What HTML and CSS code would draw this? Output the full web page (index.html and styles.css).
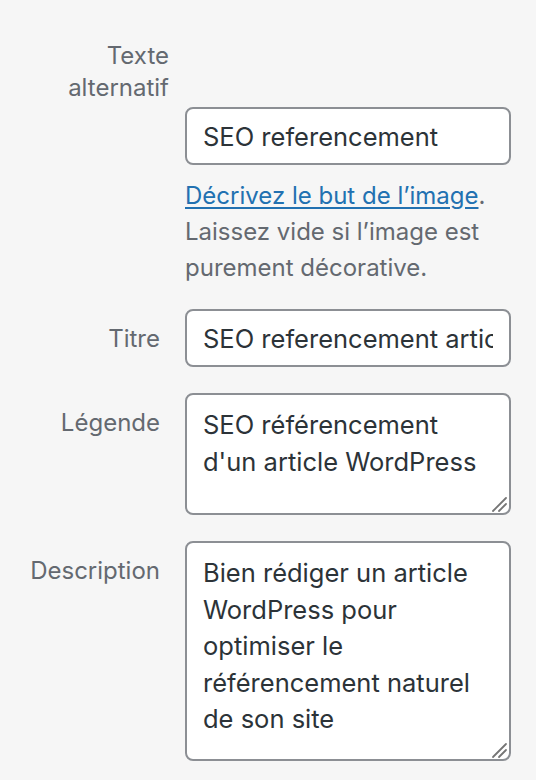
FILE: index.html
```html
<!DOCTYPE html>
<html lang="fr">
<head>
<meta charset="utf-8">
<title>Détails du fichier joint</title>
<link rel="stylesheet" href="styles.css">
</head>
<body>
<div class="settings">
  <label class="name name-alt" for="alt">Texte alternatif</label>
  <div class="field field-alt">
    <input id="alt" class="text" type="text" value="SEO referencement">
    <p class="help"><a href="#">Décrivez le but de l’image</a>. Laissez vide si l’image est purement décorative.</p>
  </div>

  <label class="name" for="title">Titre</label>
  <div class="field">
    <input id="title" class="text" type="text" value="SEO referencement article WordPress">
  </div>

  <label class="name" for="caption">Légende</label>
  <div class="field area">
    <textarea id="caption" class="textarea caption">SEO référencement
d'un article WordPress</textarea>
    <svg class="grip" viewBox="0 0 20 20" aria-hidden="true"><path d="M4 18 L17 5 M10 18 L17 11"/></svg>
  </div>

  <label class="name" for="desc">Description</label>
  <div class="field area">
    <textarea id="desc" class="textarea desc">Bien rédiger un article WordPress pour optimiser le référencement naturel de son site</textarea>
    <svg class="grip" viewBox="0 0 20 20" aria-hidden="true"><path d="M4 18 L17 5 M10 18 L17 11"/></svg>
  </div>
</div>
</body>
</html>
```

FILE: styles.css
```css
html, body {
  margin: 0;
  padding: 0;
  background: #f6f6f6;
}

body {
  font-family: Inter, "Noto Sans", "Liberation Sans", sans-serif;
  width: 536px;
  height: 780px;
  overflow: hidden;
}

.settings {
  display: grid;
  grid-template-columns: 169px 326px;
  column-gap: 16px;
  row-gap: 26px;
  padding-top: 26px;
}

.name {
  display: block;
  padding: 14px 9px 0 20px;
  text-align: right;
  font-size: 24px;
  line-height: 32px;
  color: #646970;
}

.name-alt {
  padding-left: 40px;
  padding-right: 0;
}

.field {
  min-width: 0;
}

.field-alt {
  padding-top: 81px;
}

.text,
.textarea {
  display: block;
  box-sizing: border-box;
  width: 100%;
  margin: 0;
  border: 2px solid #8c8f94;
  border-radius: 8px;
  background: #fff;
  color: #2c3338;
  font-family: Inter, "Noto Sans", "Liberation Sans", sans-serif;
  font-size: 25.5px;
  outline: none;
}

.text {
  height: 58px;
  padding: 0 16px;
}

.textarea {
  padding: 12px 16px 10px;
  line-height: 36.5px;
  resize: none;
  overflow: hidden;
}

.caption {
  height: 122px;
}

.desc {
  height: 220px;
}

.help {
  margin: 13px 0 -3px;
  font-size: 24px;
  line-height: 36px;
  color: #646970;
}

.help a {
  color: #2271b1;
  text-decoration: underline;
  text-decoration-thickness: 2px;
  text-underline-offset: 3px;
}

.area {
  position: relative;
}

.grip {
  position: absolute;
  right: 2px;
  bottom: 2px;
  width: 20px;
  height: 20px;
}

.grip path {
  fill: none;
  stroke: #757575;
  stroke-width: 1.8;
  stroke-linecap: round;
}
```
